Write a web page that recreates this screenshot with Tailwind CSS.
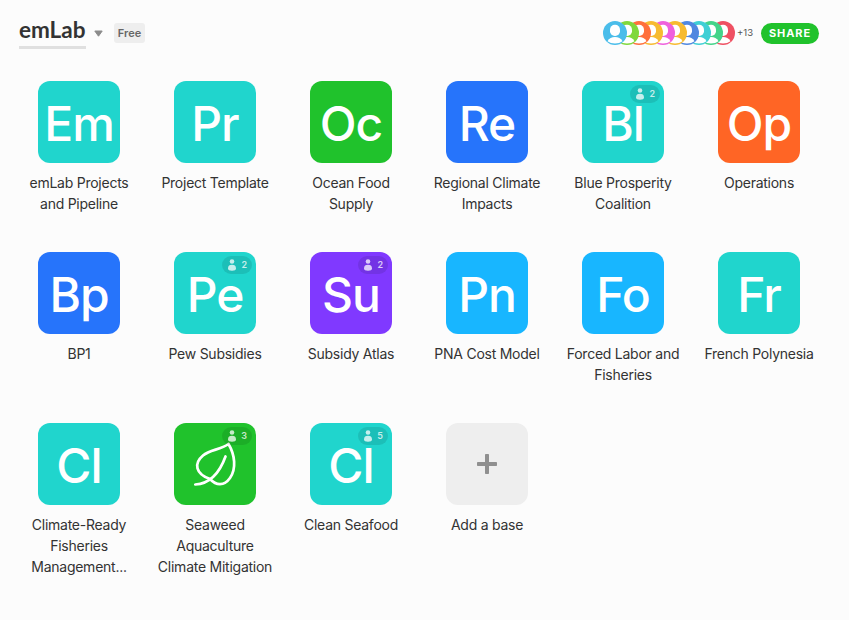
<!DOCTYPE html>
<html lang="en">
<head>
<meta charset="utf-8">
<title>emLab</title>
<script src="https://cdn.jsdelivr.net/npm/@tailwindcss/browser@4"></script>
</head>
<body class="w-[849px] h-[620px] overflow-hidden bg-[#fcfcfc] font-['Inter','Liberation_Sans',sans-serif] text-[#333]">
<header class="flex h-[81px] items-start justify-between pl-[19px] pr-[30px]">
  <div class="flex items-start">
    <h1 class="mt-[16px] h-[33px] w-[67px] border-b-3 border-[#e0e0e0] whitespace-nowrap font-['Lato',sans-serif] text-[22.5px] leading-[28px] font-bold">emLab</h1>
    <svg class="mt-[30px] ml-[8px]" width="9" height="7" viewBox="0 0 9 7"><path d="M0.8 1H8.2L4.5 6.2Z" fill="#8c8c8c" stroke="#8c8c8c" stroke-linejoin="round"/></svg>
    <span class="mt-[23px] ml-[11px] flex h-[20px] w-[31px] items-center justify-center rounded-[3px] bg-[#eee] text-[11px] font-semibold text-[#666]">Free</span>
  </div>
  <div class="mt-[21px] flex h-[24px] items-center">
    <div id="people" class="flex flex-row-reverse"></div>
    <span class="ml-[2px] w-[24px] text-[9.5px] text-[#555]">+13</span>
    <button class="h-[21px] w-[58px] rounded-full bg-[#20c22c] text-[11px] font-bold tracking-[0.9px] text-white">SHARE</button>
  </div>
</header>
<main id="bases" class="grid w-[816px] grid-cols-6 auto-rows-[171px] ml-[11px]"></main>
<script>
const colors = ['#4abdea','#7fd83c','#ff6f3c','#f7bb30','#ef60dd','#f7bb30','#4f87e0','#3fcfd5','#43d48a','#ef5062'];
document.getElementById('people').innerHTML = colors.slice().reverse().map((c, i) => `
  <svg class="${i === 9 ? '' : '-ml-[12px]'} relative" width="24" height="24" viewBox="0 0 24 24"><circle cx="12" cy="12" r="12" fill="${c}"/><rect x="7" y="3.8" width="10" height="11.2" rx="4.8" fill="#fff"/><path d="M4.5 20.2Q7 16 12 16T19.5 20.2Q16.5 22.4 12 22.4T4.5 20.2Z" fill="#fff"/></svg>`).join('');

const bases = [
  ['Em','#20d5cd','emLab Projects<br>and Pipeline'],
  ['Pr','#20d5cd','Project Template'],
  ['Oc','#20c22c','Ocean Food<br>Supply'],
  ['Re','#2674fb','Regional Climate<br>Impacts'],
  ['Bl','#20d5cd','Blue Prosperity<br>Coalition',2],
  ['Op','#ff6525','Operations'],
  ['Bp','#2674fb','BP1'],
  ['Pe','#20d5cd','Pew Subsidies',2],
  ['Su','#8039ff','Subsidy Atlas',2],
  ['Pn','#18b6ff','PNA Cost Model'],
  ['Fo','#18b6ff','Forced Labor and<br>Fisheries'],
  ['Fr','#20d5cd','French Polynesia'],
  ['Cl','#20d5cd','Climate-Ready<br>Fisheries<br>Management...'],
  ['leaf','#20c22c','Seaweed<br>Aquaculture<br>Climate Mitigation',3],
  ['Cl','#20d5cd','Clean Seafood',5],
  ['plus','#eeeeee','Add a base']
];
const icons = {
  leaf: '<svg width="82" height="82" viewBox="0 0 82 82" fill="none" stroke="#fff" stroke-width="2.7" stroke-linecap="round" stroke-linejoin="round"><path d="M54.5 21C46 27 36 26.500 29 32.500C19.500 40.500 21.500 51 36 56C42 62.500 50 63.500 56 55C62.500 45.500 61 32 54.500 21Z"/><path d="M51.500 33.500C47 46 38.500 60.500 21.300 61.500"/></svg>',
  plus: '<svg width="82" height="82" viewBox="0 0 82 82" fill="#8f8f8f"><rect x="31" y="39" width="20" height="4" rx=".7"/><rect x="39" y="31" width="4" height="20" rx=".7"/></svg>'
};
document.getElementById('bases').innerHTML = bases.map(([k, c, label, n]) => `
  <div class="flex flex-col items-center">
    <div class="relative flex size-[82px] items-center justify-center rounded-[12px]" style="background:${c}">
      ${icons[k] || `<span class="pt-[3px] text-[48px] leading-[58px] font-medium tracking-[-1px] text-white">${k}</span>`}
      ${n ? `<span class="absolute top-[4px] right-[4px] flex h-[18px] w-[30px] items-center justify-between rounded-full bg-black/10 pr-[5px] pl-[5px] text-[9px] font-semibold text-white/75"><svg width="10" height="12" viewBox="0 0 10 12" fill="currentColor"><circle cx="5" cy="2.500" r="2.300"/><path d="M1 9.200C1 6.900 2.500 5.800 5 5.800S9 6.900 9 9.200C9 11 7.500 11.700 5 11.700S1 11 1 9.200Z"/></svg>${n}</span>` : ''}
    </div>
    <div class="mt-[9px] whitespace-nowrap text-center text-[14px] leading-[21px] tracking-[-0.25px]">${label}</div>
  </div>`).join('');
</script>
</body>
</html>
